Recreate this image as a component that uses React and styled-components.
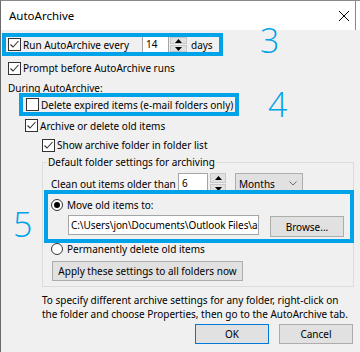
import React from "react";
import styled, { createGlobalStyle } from "styled-components";

const GlobalStyle = createGlobalStyle`
  html, body { margin: 0; padding: 0; background: #f0f0f0; }
  body { font-family: "Noto Sans", "Open Sans", sans-serif; font-size: 10px; color: #000; }
  * { box-sizing: border-box; }
`;

const BLUE = "#00a2e8";

const Window = styled.div`
  width: 360px;
  height: 352px;
  overflow: hidden;
  background: #f0f0f0;
  border-left: 1px solid #6b6b6b;
  border-top: 1px solid #8a8a8a;
  display: flex;
  flex-direction: column;
`;

const TitleBar = styled.div`
  height: 29px;
  flex: none;
  display: flex;
  align-items: center;
  justify-content: space-between;
  padding: 0 11px 0 8px;
  background: linear-gradient(to right, #fff 354px, #8a8a8a 354px, #8a8a8a 355px, #fff 355px);
`;

const Title = styled.span`
  font-size: 11.5px;
  line-height: 16px;
  margin-top: 1px;
`;

const Body = styled.div`
  position: relative;
  display: flex;
  flex-direction: column;
`;

const AnnotatedLine = styled.div`
  display: flex;
  align-items: center;
  height: ${(p) => p.$h}px;
  margin-top: ${(p) => p.$mt || 0}px;
  flex: none;
`;

const Highlight = styled.div`
  position: relative;
  z-index: 1;
  display: flex;
  align-items: ${(p) => (p.$col ? "stretch" : "center")};
  flex-direction: ${(p) => (p.$col ? "column" : "row")};
  width: ${(p) => p.$w}px;
  height: ${(p) => p.$h}px;
  margin-left: ${(p) => p.$x || 0}px;
  margin-top: ${(p) => p.$mt || 0}px;
  padding-left: ${(p) => p.$pad || 0}px;
  border: 4px solid ${BLUE};
  flex: none;
`;

const Marker = styled.span`
  font-family: "Open Sans", "Noto Sans", sans-serif;
  font-weight: 300;
  font-size: 34px;
  height: 23px;
  line-height: 23px;
  color: ${BLUE};
  margin-left: ${(p) => p.$x}px;
  margin-bottom: ${(p) => p.$lift || 0}px;
`;

const FloatingMarker = styled(Marker)`
  position: absolute;
  left: ${(p) => p.$left}px;
  top: ${(p) => p.$top}px;
  margin: 0;
`;

const OptionRow = styled.div`
  display: flex;
  align-items: center;
  height: ${(p) => p.$h}px;
  margin-left: ${(p) => p.$x}px;
  margin-top: ${(p) => p.$mt || 0}px;
  flex: none;
`;

const Caption = styled.div`
  height: ${(p) => p.$h}px;
  line-height: ${(p) => p.$lh}px;
  margin-left: ${(p) => p.$x}px;
  white-space: nowrap;
  flex: none;
`;

const Label = styled.span`
  white-space: nowrap;
  line-height: 14px;
  ${(p) => (p.$w ? `width: ${p.$w}px; flex: none;` : "")}
  margin-left: ${(p) => p.$ml || 0}px;
`;

const CheckBox = styled.span`
  width: 13px;
  height: 13px;
  flex: none;
  border: 1px solid #333;
  background: #fff;
  margin-right: 2px;
  display: flex;
  align-items: center;
  justify-content: center;
`;

const Check = ({ checked }) => (
  <CheckBox>
    {checked && (
      <svg width="11" height="11" viewBox="0 0 11 11">
        <path d="M1.5 5.5 L4 8 L9.5 2" fill="none" stroke="#333" strokeWidth="1.1" />
      </svg>
    )}
  </CheckBox>
);

const RadioCircle = styled.span`
  width: 12px;
  height: 12px;
  flex: none;
  border-radius: 50%;
  border: 1px solid #333;
  background: #fff;
  margin-right: 4px;
  display: flex;
  align-items: center;
  justify-content: center;
`;

const RadioDot = styled.span`
  width: 6px;
  height: 6px;
  border-radius: 50%;
  background: #000;
`;

const Radio = ({ selected }) => <RadioCircle>{selected && <RadioDot />}</RadioCircle>;

const TextBox = styled.div`
  width: ${(p) => p.$w}px;
  height: ${(p) => p.$h}px;
  margin-left: ${(p) => p.$ml || 0}px;
  flex: none;
  background: #fff;
  border: 1px solid #a5a5a5;
  ${(p) => (p.$open ? "border-top: none; border-bottom: none;" : "")}
  padding-left: ${(p) => (p.$tight ? 2 : 3)}px;
  letter-spacing: ${(p) => (p.$tight ? "-0.08px" : "normal")};
  line-height: ${(p) => p.$h - (p.$open ? 0 : 2)}px;
  white-space: nowrap;
  overflow: hidden;
`;

const Spinner = styled.div`
  width: ${(p) => p.$w}px;
  height: ${(p) => p.$h}px;
  margin-left: ${(p) => p.$ml || 0}px;
  flex: none;
  display: flex;
  flex-direction: column;
  gap: 1px;
`;

const SpinHalf = styled.div`
  flex: 1;
  background: #e1e1e1;
  border: 1px solid #c8c8c8;
  display: flex;
  align-items: center;
  justify-content: center;
`;

const SpinBox = ({ w, h, ml }) => (
  <Spinner $w={w} $h={h} $ml={ml}>
    <SpinHalf>
      <svg width="7" height="4" viewBox="0 0 7 4">
        <path d="M0 4 L3.5 0 L7 4 Z" fill="#000" />
      </svg>
    </SpinHalf>
    <SpinHalf>
      <svg width="7" height="4" viewBox="0 0 7 4">
        <path d="M0 0 L3.5 4 L7 0 Z" fill="#000" />
      </svg>
    </SpinHalf>
  </Spinner>
);

const Dropdown = styled.div`
  width: ${(p) => p.$w}px;
  height: ${(p) => p.$h}px;
  margin-left: ${(p) => p.$ml || 0}px;
  flex: none;
  background: #e1e1e1;
  border: 1px solid #adadad;
  display: flex;
  align-items: center;
  justify-content: space-between;
  padding: 0 5px 0 3px;
`;

const PushButton = styled.div`
  width: ${(p) => p.$w}px;
  height: ${(p) => p.$h}px;
  margin-left: ${(p) => p.$ml || 0}px;
  margin-top: ${(p) => p.$mt || 0}px;
  flex: none;
  background: #e1e1e1;
  border: 1px solid ${(p) => (p.$default ? "#0078d7" : "#adadad")};
  display: flex;
  align-items: center;
  justify-content: center;
  white-space: nowrap;
`;

const Group = styled.fieldset`
  margin: 0 0 0 41px;
  width: 312px;
  padding: 0 0 5px 0;
  border: 1px solid #dcdcdc;
  min-width: 0;
  display: flex;
  flex-direction: column;
  flex: none;
`;

const GroupTitle = styled.legend`
  margin-left: 4px;
  padding: 0 1px;
  line-height: 14px;
  font-size: 10px;
`;

const PathRow = styled.div`
  display: flex;
  align-items: flex-start;
  height: 24px;
`;

const Footer = styled.div`
  margin: 6px 0 0 41px;
  line-height: 14px;
  white-space: nowrap;
  flex: none;
`;

const ButtonBar = styled.div`
  display: flex;
  justify-content: flex-end;
  gap: 10px;
  margin-top: 3px;
  padding-right: 7px;
  flex: none;
`;

const CloseIcon = () => (
  <svg width="10" height="10" viewBox="0 0 10 10">
    <path d="M0 0 L10 10 M10 0 L0 10" stroke="#000" strokeWidth="1" />
  </svg>
);

const Chevron = () => (
  <svg width="8" height="5" viewBox="0 0 8 5">
    <path d="M0.5 0.5 L4 4 L7.5 0.5" fill="none" stroke="#6a6a6a" strokeWidth="1" />
  </svg>
);

export default function App() {
  return (
    <>
      <GlobalStyle />
      <Window>
        <TitleBar>
          <Title>AutoArchive</Title>
          <CloseIcon />
        </TitleBar>
        <Body>
          <AnnotatedLine $h={23} $mt={3}>
            <Highlight $x={1} $w={221} $h={23} $pad={2}>
              <Check checked />
              <Label $w={119}>Run AutoArchive every</Label>
              <TextBox $w={27} $h={15} $open>14</TextBox>
              <SpinBox w={17} h={15} ml={1} />
              <Label $ml={4}>days</Label>
            </Highlight>
            <Marker $x={37} $lift={8}>3</Marker>
          </AnnotatedLine>

          <OptionRow $x={7} $h={22} $mt={1}>
            <Check checked />
            <Label>Prompt before AutoArchive runs</Label>
          </OptionRow>

          <Caption $x={7} $h={14} $lh={18}>During AutoArchive:</Caption>

          <AnnotatedLine $h={23}>
            <Highlight $x={18} $w={220} $h={23} $pad={3}>
              <Check />
              <Label>Delete expired items (e-mail folders only)</Label>
            </Highlight>
            <Marker $x={29}>4</Marker>
          </AnnotatedLine>

          <OptionRow $x={24} $h={19}>
            <Check checked />
            <Label>Archive or delete old items</Label>
          </OptionRow>

          <OptionRow $x={41} $h={20}>
            <Check checked />
            <Label>Show archive folder in folder list</Label>
          </OptionRow>

          <Group>
            <GroupTitle>Default folder settings for archiving</GroupTitle>
            <OptionRow $x={8} $h={21} $mt={4}>
              <Label $w={127}>Clean out items older than</Label>
              <TextBox $w={30} $h={21}>6</TextBox>
              <SpinBox w={16} h={21} ml={2} />
              <Dropdown $w={68} $h={21} $ml={9}>
                <span>Months</span>
                <Chevron />
              </Dropdown>
            </OptionRow>

            <Highlight $col $x={1} $w={310} $h={53} $mt={-4}>
              <OptionRow $x={3} $h={21}>
                <Radio selected />
                <Label>Move old items to:</Label>
              </OptionRow>
              <PathRow>
                <TextBox $w={191} $h={20} $ml={20} $tight>
                  C:\Users\jon\Documents\Outlook Files\a
                </TextBox>
                <PushButton $w={74} $h={21} $ml={11} $mt={1}>
                  Browse...
                </PushButton>
              </PathRow>
            </Highlight>

            <OptionRow $x={8} $h={12}>
              <Radio />
              <Label>Permanently delete old items</Label>
            </OptionRow>

            <PushButton $w={191} $h={20} $ml={9} $mt={6}>
              Apply these settings to all folders now
            </PushButton>
          </Group>

          <Footer>
            To specify different archive settings for any folder, right-click on
            <br />
            the folder and choose Properties, then go to the AutoArchive tab.
          </Footer>

          <ButtonBar>
            <PushButton $w={74} $h={20} $default>OK</PushButton>
            <PushButton $w={74} $h={20}>Cancel</PushButton>
          </ButtonBar>

          <FloatingMarker $left={12} $top={183}>5</FloatingMarker>
        </Body>
      </Window>
    </>
  );
}
